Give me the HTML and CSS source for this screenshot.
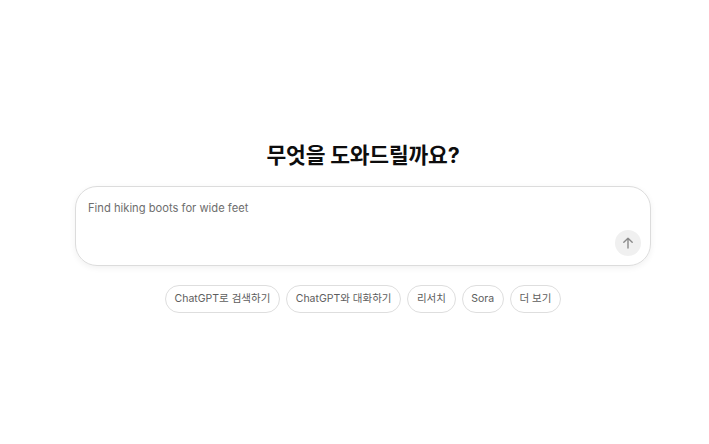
FILE: index.html
```html
<!DOCTYPE html>
<html lang="ko">
<head>
<meta charset="utf-8">
<link rel="stylesheet" href="styles.css">
</head>
<body>
<main class="page">
  <h1 class="title">무엇을 도와드릴까요?</h1>
  <div class="composer">
    <div class="placeholder">Find hiking boots for wide feet</div>
    <div class="composer-footer">
      <button class="send" aria-label="보내기">
        <svg width="14" height="14" viewBox="0 0 14 14" fill="none" stroke="#8a8a8a" stroke-width="1.4" stroke-linecap="round" stroke-linejoin="round"><path d="M7 12V2.2M2.8 6.3L7 2.2l4.2 4.1"/></svg>
      </button>
    </div>
  </div>
  <div class="chips">
    <span class="chip">ChatGPT로 검색하기</span>
    <span class="chip">ChatGPT와 대화하기</span>
    <span class="chip">리서치</span>
    <span class="chip">Sora</span>
    <span class="chip">더 보기</span>
  </div>
</main>
</body>
</html>
```

FILE: styles.css
```css
html, body {
  margin: 0;
  padding: 0;
  background: #ffffff;
}
body {
  font-family: "Inter", "Noto Sans CJK KR", "Noto Sans", sans-serif;
  color: #0d0d0d;
}
.page {
  display: flex;
  flex-direction: column;
  align-items: center;
  padding-top: 141px;
  padding-left: 17px;
}
.title {
  margin: 0 0 17px;
  font-size: 21.5px;
  line-height: 28px;
  font-weight: 700;
  letter-spacing: -0.2px;
  color: #0d0d0d;
}
.composer {
  box-sizing: border-box;
  width: 576px;
  height: 80px;
  border: 1px solid #dcdcdc;
  border-radius: 22px;
  box-shadow: 0 2px 6px rgba(0, 0, 0, 0.06);
  padding: 14px 9px 9px 12px;
  display: flex;
  flex-direction: column;
  justify-content: space-between;
}
.placeholder {
  font-size: 11.2px;
  line-height: 15px;
  color: #6e6e6e;
}
.composer-footer {
  display: flex;
  justify-content: flex-end;
}
.send {
  width: 26px;
  height: 26px;
  border: none;
  border-radius: 50%;
  background: #f0f0f0;
  padding: 0;
  display: flex;
  align-items: center;
  justify-content: center;
}
.chips {
  margin-top: 19px;
  display: flex;
  gap: 6px;
}
.chip {
  box-sizing: border-box;
  height: 28px;
  padding: 0 8.7px;
  border: 1px solid #dedede;
  border-radius: 14px;
  font-size: 10.5px;
  line-height: 26px;
  color: #5d5d5d;
}
```
